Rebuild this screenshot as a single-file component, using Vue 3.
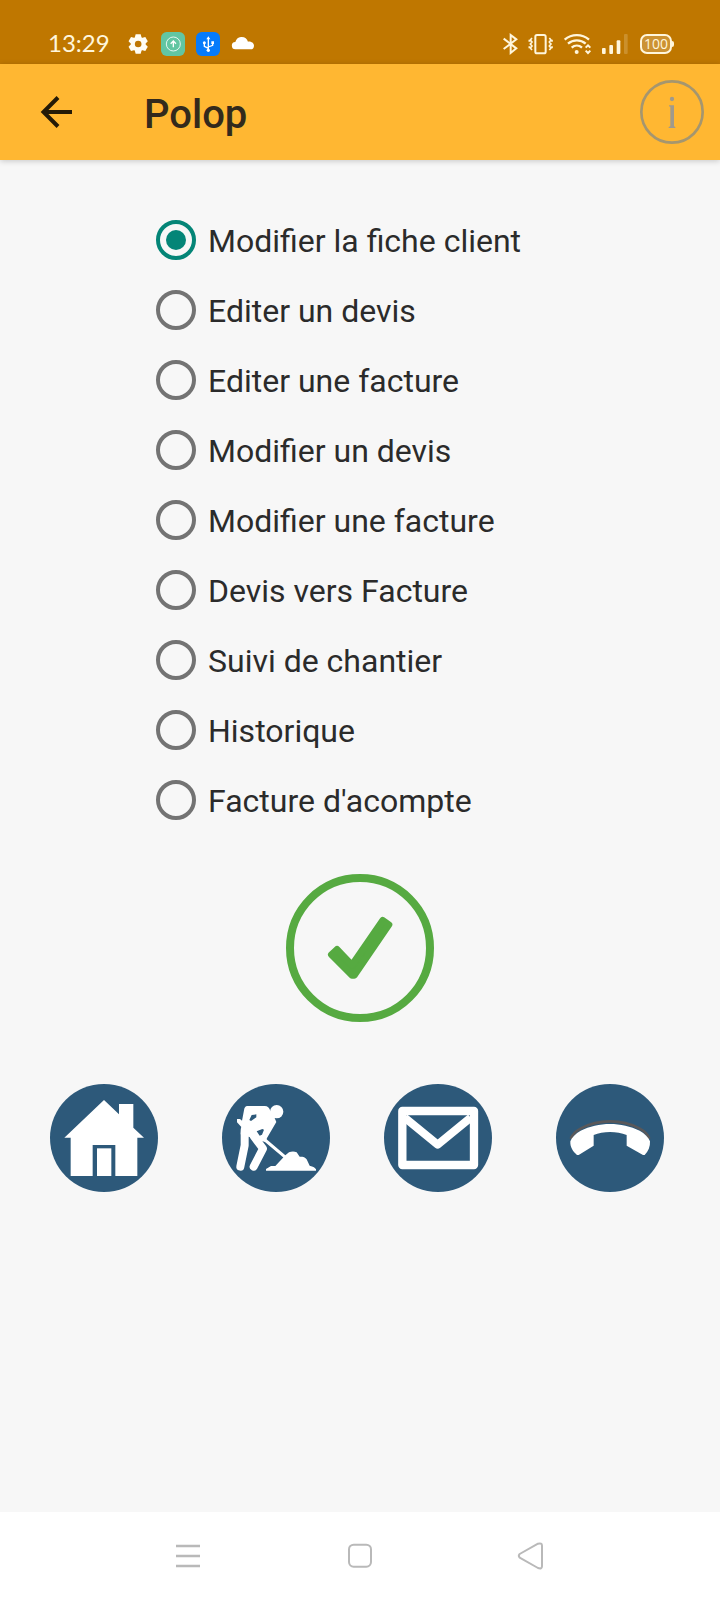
<script setup>
import { ref } from 'vue'

const actions = [
  'Modifier la fiche client',
  'Editer un devis',
  'Editer une facture',
  'Modifier un devis',
  'Modifier une facture',
  'Devis vers Facture',
  'Suivi de chantier',
  'Historique',
  "Facture d'acompte",
]
const selected = ref(0)
const teeth = [0, 60, 120, 180, 240, 300]
</script>

<template>
  <div class="screen">
    <div class="status">
      <span class="time">13:29</span>
      <div class="status-left">
        <svg class="w24" viewBox="288 51 72 72" aria-hidden="true">
          <g fill="#fffdf4">
            <path
              v-for="a in teeth"
              :key="a"
              d="M317 58h15l4 14h-23z"
              :transform="`rotate(${a} 324.500 87)`"
            />
          </g>
          <circle cx="324.500" cy="87" r="16" fill="none" stroke="#fffdf4" stroke-width="12" />
        </svg>
        <svg class="w24" viewBox="393 51 72 72" aria-hidden="true">
          <rect x="393" y="51" width="72" height="72" rx="17" fill="#62c6a2" />
          <circle cx="430" cy="87" r="21" fill="none" stroke="#fff" stroke-width="2.500" />
          <path d="M430 97V79M422 86l8-8 8 8" fill="none" stroke="#fff" stroke-width="4" />
        </svg>
        <svg class="w24" viewBox="498 51 72 72" aria-hidden="true">
          <rect x="498" y="51" width="72" height="72" rx="17" fill="#067bfb" />
          <path d="M535 106V70M535 100l-12-6V84M535 96l13-5V82" fill="none" stroke="#fff" stroke-width="4" />
          <path d="M535 64l6 9h-12zM544 79h8v8h-8z" fill="#fff" />
          <circle cx="523" cy="83" r="4.500" fill="#fff" />
          <circle cx="535" cy="106" r="5" fill="#fff" />
        </svg>
        <svg class="w24" viewBox="603 51 72 72" aria-hidden="true">
          <path d="M617 103a11 11 0 0 1-1-22c2-8 8-14 17-15 11-1 18 5 21 14 9-1 18 4 18 12 0 7-4 11-10 11z" fill="#fff" />
        </svg>
      </div>
      <div class="status-right">
        <svg class="w16" viewBox="36 51 48 72" aria-hidden="true">
          <path d="M41 71l38 29-17 14V60l17 13-38 29" fill="none" stroke="#fff6dc" stroke-width="6" />
        </svg>
        <svg class="w25" viewBox="114 51 75 72" aria-hidden="true">
          <rect x="136" y="60" width="31" height="55" rx="5" fill="none" stroke="#fff6dc" stroke-width="6" />
          <path
            d="M126 69l-5 6 5 6-5 6 5 6-5 6 5 6M118 74v6M118 94v6M178 69l5 6-5 6 5 6-5 6 5 6-5 6M186 74v6M186 94v6"
            fill="none"
            stroke="#fff6dc"
            stroke-width="5"
          />
        </svg>
        <svg class="w28" viewBox="219 51 84 72" aria-hidden="true">
          <path
            d="M224 74c21-18 52-18 73 0M234 86c15-13 38-13 53 0M245 98c9-8 22-8 31 0"
            fill="none"
            stroke="#fff6dc"
            stroke-width="7"
          />
          <circle cx="260" cy="111" r="6" fill="#fff6dc" />
          <path d="M287 98l7-7 7 7M287 107l7 7 7-7" fill="none" stroke="#fff6dc" stroke-width="6" />
        </svg>
        <svg class="w29" viewBox="333 51 87 72" aria-hidden="true">
          <g fill="#fff6dc">
            <rect x="336" y="99" width="11" height="18" rx="3" />
            <rect x="358" y="90" width="11" height="27" rx="3" />
            <rect x="380" y="76" width="11" height="41" rx="3" />
            <rect x="402" y="57" width="11" height="60" rx="3" opacity="0.200" />
          </g>
        </svg>
        <span class="battery">100</span>
      </div>
    </div>

    <header class="bar">
      <button class="back" type="button" aria-label="Retour">
        <svg viewBox="0 0 32 32" aria-hidden="true">
          <path d="M32 16H4M18 1.500L3.500 16 18 30.500" fill="none" stroke="#241a07" stroke-width="4" />
        </svg>
      </button>
      <h1>Polop</h1>
      <button class="info" type="button" aria-label="Informations">
        <svg viewBox="120 60 192 192" aria-hidden="true">
          <circle cx="216" cy="156" r="92" fill="none" stroke="#a5966f" stroke-width="8" />
          <circle cx="216" cy="117" r="6.500" fill="#a09a8c" />
          <path d="M207 136h15v63l4 2v3h-20v-3l5-2v-59l-4-1z" fill="#a09a8c" />
        </svg>
      </button>
    </header>

    <main>
      <form class="choices">
        <label v-for="(name, i) in actions" :key="name" class="choice">
          <input v-model="selected" type="radio" name="action" :value="i" />
          <span>{{ name }}</span>
        </label>
      </form>

      <button class="confirm" type="button" aria-label="Valider">
        <svg viewBox="48 42 444 444" aria-hidden="true">
          <circle cx="270" cy="264" r="210" fill="none" stroke="#56aa41" stroke-width="24" />
          <path
            d="M184 284l17-16 45 47 92-134 19 13-104 152h-7z"
            fill="#56aa41"
            stroke="#56aa41"
            stroke-width="20"
            stroke-linejoin="round"
          />
        </svg>
      </button>

      <div class="shortcuts">
        <div class="pair">
          <button type="button" aria-label="Accueil">
            <svg viewBox="30 42 324 324" aria-hidden="true">
              <path
                d="M192 90l45 43v-31h43v71l32 30h-20v115h-66v-93h-68v93H92V203H73z"
                fill="#fff"
              />
              <path d="M171 235h43v83h-43z" fill="#fff" />
            </svg>
          </button>
          <button type="button" aria-label="Chantier">
            <svg viewBox="36 42 324 324" aria-hidden="true">
              <g fill="#fff">
                <circle cx="200" cy="125" r="20" />
                <path
                  fill-rule="evenodd"
                  d="M112 108h52c9 0 14 6 17 14l12 20 6 14-28 48-4 12-14-3-35-12-26-8 2-22-13-14v-10h9l6 5 6-31c1-8 4-13 10-13zM125 135l-7 15 5 3 16-11v-9zM140 184l9 13 7-3 6-15-5-2z"
                />
                <path d="M168 302v-5l15-9h13l30-32 11-9c8-3 16-3 23 0l9 13h8c8 1 13 6 15 12l7 15c10 2 18 7 19 11v4z" />
              </g>
              <g fill="none" stroke="#fff" stroke-linecap="round" stroke-linejoin="round">
                <path d="M104 180v46l-13 64" stroke-width="24" />
                <path d="M132 200l27 36-28 54" stroke-width="24" />
                <path d="M165 210l66 56" stroke-width="9" />
              </g>
            </svg>
          </button>
        </div>
        <div class="pair">
          <button type="button" aria-label="Message">
            <svg viewBox="42 42 324 324" aria-hidden="true">
              <rect x="97" y="123" width="215" height="162" fill="none" stroke="#fff" stroke-width="25" stroke-linejoin="round" />
              <path d="M104 143l99 81 99-81" fill="none" stroke="#fff" stroke-width="24" stroke-linejoin="round" />
            </svg>
          </button>
          <button type="button" aria-label="Appeler">
            <svg viewBox="33 42 324 324" aria-hidden="true">
              <path
                d="M77 206c5-12 16-23 31-31 53-28 122-28 175 0 15 8 26 19 30 31"
                fill="none"
                stroke="#59585a"
                stroke-width="8"
              />
              <path
                d="M76 214c4-12 16-23 31-32 53-27 123-27 177 0 15 9 27 20 31 32 1 16-5 30-16 41h-5l-49-28v-32c-29-12-71-12-99 0v32l-45 28h-5c-12-10-21-23-20-41z"
                fill="#fff"
              />
            </svg>
          </button>
        </div>
      </div>
    </main>

    <nav class="system">
      <button type="button" aria-label="Applications récentes">
        <svg viewBox="72 127 84 84" aria-hidden="true">
          <path d="M78 139h72M78 169h72M78 199h72" stroke="#b9b9b9" stroke-width="7" />
        </svg>
      </button>
      <button type="button" aria-label="Écran d'accueil">
        <svg viewBox="588 127 84 84" aria-hidden="true">
          <rect x="597" y="135" width="66" height="66" rx="14" fill="none" stroke="#b9b9b9" stroke-width="6" />
        </svg>
      </button>
      <button type="button" aria-label="Précédent">
        <svg viewBox="1104 127 84 84" aria-hidden="true">
          <path
            d="M1109 163l55-31q12-3 12 6v62q0 9-12 5l-55-31q-5-6 0-11z"
            fill="none"
            stroke="#b9b9b9"
            stroke-width="6"
            stroke-linejoin="round"
          />
        </svg>
      </button>
    </nav>
  </div>
</template>

<style>
body {
  background: #f7f7f7;
}
</style>

<style scoped>
.screen {
  display: flex;
  flex-direction: column;
  min-height: 100vh;
  font-family: Roboto, "Liberation Sans", sans-serif;
  color: #2b2b2b;
  background: #f7f7f7;
}

button {
  display: block;
  flex: none;
  padding: 0;
  border: 0;
  background: none;
  cursor: pointer;
}

svg {
  display: block;
  width: 100%;
  height: 100%;
  overflow: visible;
}

.status {
  display: flex;
  align-items: center;
  box-sizing: border-box;
  height: 64px;
  padding: 24px 46px 0 48px;
  background: #bf7700;
  color: #fff6dc;
}

.time {
  width: 78px;
  padding-bottom: 2px;
  font-family: Lato, Roboto, sans-serif;
  font-size: 24px;
  line-height: 32px;
}

.status-left {
  display: flex;
  gap: 11px;
}

.status-right {
  display: flex;
  align-items: center;
  gap: 10px;
  margin-left: auto;
}

.status svg {
  height: 24px;
}

.status .w16 {
  width: 16px;
}

.status .w24 {
  width: 24px;
}

.status .w25 {
  width: 25px;
}

.status .w28 {
  width: 28px;
}

.status .w29 {
  width: 29px;
}

.battery {
  position: relative;
  box-sizing: border-box;
  width: 32px;
  height: 20px;
  margin-right: 2px;
  border: 2px solid #fff6dc;
  border-radius: 7px;
  background: #cc9233;
  font-family: "Open Sans", sans-serif;
  font-size: 14px;
  line-height: 16px;
  text-align: center;
}

.battery::after {
  content: "";
  position: absolute;
  top: 5px;
  right: -4px;
  width: 2px;
  height: 6px;
  border-radius: 0 2px 2px 0;
  background: #fff6dc;
}

.bar {
  display: flex;
  align-items: center;
  box-sizing: border-box;
  height: 96px;
  padding: 0 16px 0 40px;
  background: #ffb732;
  box-shadow: 0 1px 6px rgba(0, 0, 0, 0.2);
}

.back {
  width: 32px;
  height: 32px;
}

h1 {
  flex: 1;
  margin: 6px 0 0 72px;
  font-size: 40px;
  font-weight: 500;
  line-height: 48px;
  color: #332a1c;
}

.info {
  width: 64px;
  height: 64px;
}

main {
  flex: 1;
  padding-top: 45px;
}

.choices {
  display: flex;
  flex-direction: column;
  align-items: flex-start;
  margin-left: 156px;
}

.choice {
  display: flex;
  align-items: center;
  gap: 12px;
  height: 70px;
  font-size: 32px;
  line-height: 38px;
  cursor: pointer;
}

.choice span {
  padding-top: 2px;
}

.choice input {
  appearance: none;
  display: grid;
  place-items: center;
  box-sizing: border-box;
  width: 40px;
  height: 40px;
  margin: 0;
  border: 4px solid #737373;
  border-radius: 50%;
}

.choice input:checked {
  border-color: #048577;
}

.choice input:checked::before {
  content: "";
  width: 20px;
  height: 20px;
  border-radius: 50%;
  background: #048577;
}

.confirm {
  width: 148px;
  height: 148px;
  margin: 39px auto 62px;
}

.shortcuts {
  display: flex;
  justify-content: space-between;
  padding: 0 56px 0 50px;
}

.pair {
  display: flex;
  gap: 64px;
}

.pair button {
  width: 108px;
  height: 108px;
  border-radius: 50%;
  background: #2d597a;
}

.system {
  display: flex;
  align-items: center;
  justify-content: center;
  gap: 144px;
  height: 88px;
  background: #fff;
}

.system button {
  width: 28px;
  height: 28px;
}
</style>
